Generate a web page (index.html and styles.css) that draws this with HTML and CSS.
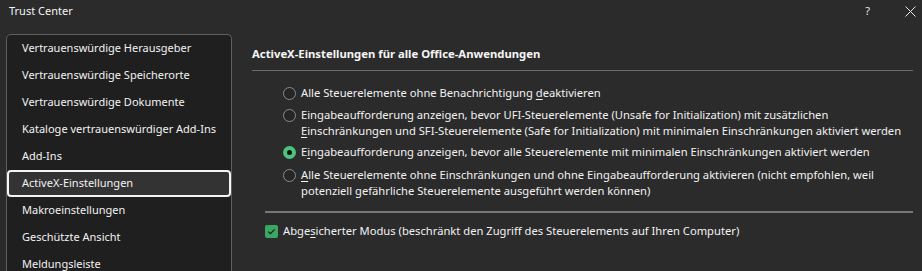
FILE: index.html
```html
<!DOCTYPE html>
<html lang="de">
<head>
<meta charset="utf-8">
<title>Trust Center</title>
<link rel="stylesheet" href="styles.css">
</head>
<body>
<div class="window">
  <header class="titlebar">
    <span class="title">Trust Center</span>
    <div class="controls">
      <span class="help">?</span>
      <svg class="close" width="11" height="11" viewBox="0 0 11 11"><path d="M0.5 0.5 L10.5 10.5 M10.5 0.5 L0.5 10.5" stroke="#e8e8e8" stroke-width="1" fill="none"/></svg>
    </div>
  </header>
  <div class="main">
    <nav class="sidebar">
      <ul class="nav">
        <li class="nav-item">Vertrauenswürdige Herausgeber</li>
        <li class="nav-item">Vertrauenswürdige Speicherorte</li>
        <li class="nav-item">Vertrauenswürdige Dokumente</li>
        <li class="nav-item">Kataloge vertrauenswürdiger Add-Ins</li>
        <li class="nav-item">Add-Ins</li>
        <li class="nav-item selected">ActiveX-Einstellungen</li>
        <li class="nav-item">Makroeinstellungen</li>
        <li class="nav-item">Geschützte Ansicht</li>
        <li class="nav-item">Meldungsleiste</li>
      </ul>
    </nav>
    <section class="content">
      <h2 class="heading">ActiveX-Einstellungen für alle Office-Anwendungen</h2>
      <div class="options">
        <div class="option"><span class="radio"></span><span class="label">Alle Steuerelemente ohne Benachrichtigung <u>d</u>eaktivieren</span></div>
        <div class="option"><span class="radio"></span><span class="label">Eingabeaufforderung anzeigen, bevor UFI-Steuerelemente (Unsafe for Initialization) mit zusätzlichen<br><u>E</u>inschränkungen und SFI-Steuerelemente (Safe for Initialization) mit minimalen Einschränkungen aktiviert werden</span></div>
        <div class="option"><span class="radio checked"></span><span class="label">E<u>i</u>ngabeaufforderung anzeigen, bevor alle Steuerelemente mit minimalen Einschränkungen aktiviert werden</span></div>
        <div class="option"><span class="radio"></span><span class="label"><u>A</u>lle Steuerelemente ohne Einschränkungen und ohne Eingabeaufforderung aktivieren (nicht empfohlen, weil<br>potenziell gefährliche Steuerelemente ausgeführt werden können)</span></div>
      </div>
      <hr class="divider">
      <div class="check-row">
        <span class="checkbox"><svg width="13" height="13" viewBox="0 0 13 13"><path d="M3.3 6.6 L5.4 8.6 L9.7 4.3" stroke="#1b1b1b" stroke-width="1.2" fill="none"/></svg></span>
        <span class="label">Abge<u>s</u>icherter Modus (beschränkt den Zugriff des Steuerelements auf Ihren Computer)</span>
      </div>
    </section>
  </div>
</div>
</body>
</html>
```

FILE: styles.css
```css
* { box-sizing: border-box; }
html, body {
  margin: 0;
  padding: 0;
  height: 100%;
  overflow: hidden;
}
body {
  background: #2b2b2b;
  color: #f2f2f2;
  font-family: "Noto Sans", "Open Sans", sans-serif;
  font-size: 11px;
  line-height: 16px;
}
.window {
  display: flex;
  flex-direction: column;
  height: 100%;
}
.titlebar {
  display: flex;
  align-items: center;
  justify-content: space-between;
  height: 22px;
  padding: 0 6px 0 9px;
}
.title {
  font-size: 11px;
  color: #f4f4f4;
}
.controls {
  display: flex;
  align-items: center;
  gap: 35px;
}
.help {
  font-size: 11px;
  color: #e8e8e8;
}
.close { display: block; }
.main {
  display: flex;
  padding-top: 12px;
  flex: 1;
  min-height: 0;
}
.sidebar {
  margin-left: 6px;
  width: 226px;
  height: 260px;
  flex: none;
  background: #1f1f1f;
  border: 1px solid #5e5e5e;
  border-bottom: none;
  border-radius: 5px 5px 0 0;
}
.nav {
  list-style: none;
  margin: 0;
  padding: 0;
}
.nav-item {
  height: 27px;
  line-height: 22px;
  padding-left: 13px;
  border: 2px solid transparent;
  border-radius: 4px;
  white-space: nowrap;
}
.nav-item.selected {
  background: #333333;
  border-color: #f4f4f4;
}
.content {
  flex: 1;
  margin: 0 9px 0 20px;
  min-width: 0;
  font-size: 11.2px;
}
.heading {
  margin: 12px 0 0;
  padding-bottom: 8px;
  border-bottom: 1px solid #6b6b6b;
  font-size: 11.3px;
  font-weight: 700;
  line-height: 16px;
  color: #f6f6f6;
}
.options {
  display: flex;
  flex-direction: column;
  gap: 6px;
  margin: 14px 0 0 31px;
}
.option {
  display: flex;
  align-items: flex-start;
  gap: 5px;
}
.option:nth-child(3) { margin-top: -1px; }
.option:nth-child(4) { margin-top: 1px; }
.label {
  white-space: nowrap;
}
u {
  text-decoration: underline;
  text-underline-offset: 2px;
}
.radio {
  flex: none;
  width: 13px;
  height: 13px;
  margin-top: 1.5px;
  border-radius: 50%;
  border: 1px solid #8c8c8c;
  background: #262626;
  position: relative;
}
.radio.checked {
  border: none;
  background: #4cc27f;
}
.radio.checked::after {
  content: "";
  position: absolute;
  left: 4px;
  top: 4px;
  width: 5px;
  height: 5px;
  border-radius: 50%;
  background: #121212;
}
.divider {
  margin: 12px 0 0 13px;
  border: none;
  height: 2px;
  background: #767676;
}
.check-row {
  display: flex;
  align-items: flex-start;
  gap: 5px;
  margin: 10px 0 0 13px;
}
.checkbox {
  flex: none;
  width: 13px;
  height: 13px;
  margin-top: 1.5px;
  border-radius: 2px;
  background: #3aa862;
}
.checkbox svg { display: block; }
```
